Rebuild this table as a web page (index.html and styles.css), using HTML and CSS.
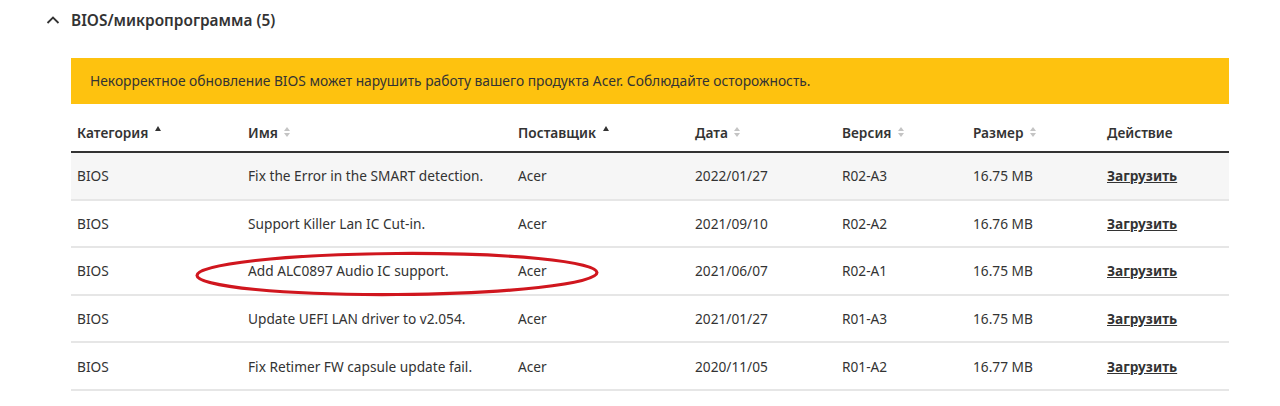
FILE: index.html
```html
<!DOCTYPE html>
<html lang="ru">
<head>
  <meta charset="UTF-8">
  <title>BIOS/микропрограмма</title>
  <link rel="stylesheet" href="styles.css">
</head>
<body>
  <section class="group">
    <h2 class="group-title">
      <svg class="chevron" width="14" height="10" viewBox="0 0 14 10"><path d="M1.5 8 L7 2.5 L12.5 8" fill="none" stroke="#333" stroke-width="1.8"/></svg>
      BIOS/микропрограмма (5)
    </h2>

    <div class="warning">Некорректное обновление BIOS может нарушить работу вашего продукта Acer. Соблюдайте осторожность.</div>

    <div class="table-wrap">
      <table class="downloads">
        <colgroup>
          <col style="width:171px"><col style="width:270px"><col style="width:177px"><col style="width:147px"><col style="width:131px"><col style="width:134px"><col>
        </colgroup>
        <thead>
          <tr>
            <th>Категория <span class="sort up"></span></th>
            <th>Имя <span class="sort both"></span></th>
            <th>Поставщик <span class="sort up"></span></th>
            <th>Дата <span class="sort both"></span></th>
            <th>Версия <span class="sort both"></span></th>
            <th>Размер <span class="sort both"></span></th>
            <th>Действие</th>
          </tr>
        </thead>
        <tbody>
          <tr class="hover">
            <td>BIOS</td><td>Fix the Error in the SMART detection.</td><td>Acer</td><td>2022/01/27</td><td>R02-A3</td><td>16.75 MB</td><td><a href="#">Загрузить</a></td>
          </tr>
          <tr>
            <td>BIOS</td><td>Support Killer Lan IC Cut-in.</td><td>Acer</td><td>2021/09/10</td><td>R02-A2</td><td>16.76 MB</td><td><a href="#">Загрузить</a></td>
          </tr>
          <tr>
            <td>BIOS</td><td>Add ALC0897 Audio IC support.</td><td>Acer</td><td>2021/06/07</td><td>R02-A1</td><td>16.75 MB</td><td><a href="#">Загрузить</a></td>
          </tr>
          <tr>
            <td>BIOS</td><td>Update UEFI LAN driver to v2.054.</td><td>Acer</td><td>2021/01/27</td><td>R01-A3</td><td>16.75 MB</td><td><a href="#">Загрузить</a></td>
          </tr>
          <tr>
            <td>BIOS</td><td>Fix Retimer FW capsule update fail.</td><td>Acer</td><td>2020/11/05</td><td>R01-A2</td><td>16.77 MB</td><td><a href="#">Загрузить</a></td>
          </tr>
        </tbody>
      </table>
      <svg class="mark" width="410" height="50" viewBox="0 0 410 50">
        <ellipse cx="205" cy="25" rx="200" ry="20.5" fill="none" stroke="#d0161e" stroke-width="3.2" transform="rotate(-0.4 205 25)"/>
      </svg>
    </div>
  </section>
</body>
</html>
```

FILE: styles.css
```css
body {
  margin: 0;
  font-family: "Noto Sans", "Open Sans", sans-serif;
  color: #333;
  background: #fff;
}

.group {
  padding: 8px 51px 0 71px;
}

.group-title {
  display: flex;
  align-items: center;
  margin: 0 0 26px -25px;
  height: 24px;
  font-size: 15.4px;
  font-weight: 600;
  color: #333;
}

.chevron {
  margin-right: 11px;
}

.warning {
  background: #fec20f;
  color: #333;
  font-size: 13.8px;
  padding: 0 19px;
  height: 46px;
  line-height: 46px;
}

.table-wrap {
  position: relative;
}

.downloads {
  width: 100%;
  border-collapse: collapse;
  table-layout: fixed;
  font-size: 13.7px;
}

.downloads th {
  text-align: left;
  font-weight: 600;
  padding: 19px 6px 9px;
  line-height: 19px;
  border-bottom: 2px solid #333;
  white-space: nowrap;
}

.downloads td {
  padding: 0 6px;
  height: 45.6px;
  border-bottom: 2px solid #e6e6e6;
  white-space: nowrap;
}

.downloads tr.hover td {
  background: #f6f6f6;
}

.downloads a {
  color: #333;
  font-weight: 700;
  text-decoration: underline;
}

.sort {
  display: inline-block;
  position: relative;
  width: 7px;
  height: 12px;
  margin-left: 3px;
  vertical-align: -1px;
}

.sort::before,
.sort::after {
  content: "";
  position: absolute;
  left: 0;
  border-left: 3.5px solid transparent;
  border-right: 3.5px solid transparent;
}

.sort.up::before {
  top: -1px;
  border-bottom: 5px solid #333;
}

.sort.both::before {
  top: 0;
  border-bottom: 4.5px solid #c4c4c4;
}

.sort.both::after {
  top: 6px;
  border-top: 4.5px solid #c4c4c4;
}

.mark {
  position: absolute;
  left: 121px;
  top: 145px;
}
```
